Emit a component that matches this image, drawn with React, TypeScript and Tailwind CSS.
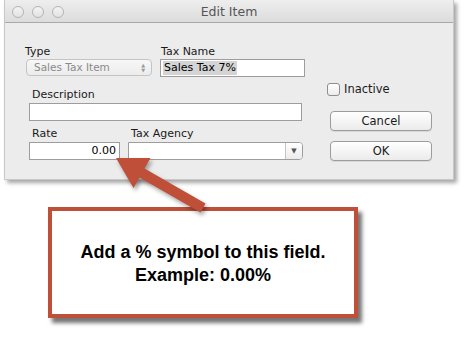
import React from 'react'

const ui = { fontFamily: '"DejaVu Sans", "Liberation Sans", sans-serif' }

function Light() {
  return <div className="w-[12px] h-[12px] rounded-full border border-[#b4b4b4] bg-gradient-to-b from-[#f4f4f4] to-[#e2e2e2]" />
}

function Label({ children, className = '' }: { children: React.ReactNode; className?: string }) {
  return <div className={`text-[11px] leading-[13px] text-[#1a1a1a] ${className}`}>{children}</div>
}

function MacButton({ children }: { children: React.ReactNode }) {
  return (
    <div className="w-[102px] h-[20px] rounded-[4px] border border-[#9c9c9c] bg-gradient-to-b from-white to-[#ebebeb] flex items-center justify-center text-[11.5px] text-[#1a1a1a] shadow-[0_1px_0_rgba(0,0,0,0.08)]">
      {children}
    </div>
  )
}

export default function App() {
  return (
    <div className="relative w-[464px] h-[339px] bg-white overflow-hidden" style={ui}>
      {/* window */}
      <div className="ml-[4px] w-[450px] h-[180px] bg-[#ececec] border-l border-r border-b border-[#c8c8c8] shadow-[3px_3px_4px_rgba(0,0,0,0.35)]">
        <div className="relative h-[23px] border-b border-[#a9a9a9] bg-gradient-to-b from-[#eeeeee] to-[#dcdcdc] flex items-center">
          <div className="flex gap-[8px] pl-[7px] pt-[1px]">
            <Light />
            <Light />
            <Light />
          </div>
          <div className="absolute inset-0 flex items-center justify-center pt-[2px] text-[12.5px] text-[#555555]">Edit Item</div>
        </div>

        <div className="flex">
          {/* left side */}
          <div className="w-[300px]">
            <div className="flex pt-[22px] pl-[20px]">
              <div className="w-[138px]">
                <Label>Type</Label>
                <div className="mt-[1px] ml-[1px] w-[126px] h-[17px] rounded-[4px] border border-[#c4c4c4] bg-gradient-to-b from-[#f7f7f7] to-[#ececec] flex items-center justify-between pl-[7px] pr-[6px]">
                  <span className="text-[10.5px] text-[#8a8a8a]">Sales Tax Item</span>
                  <span className="flex flex-col items-center leading-none text-[#9a9a9a] text-[5px]">
                    <span>▲</span>
                    <span>▼</span>
                  </span>
                </div>
              </div>
              <div>
                <Label className="ml-[1px]">Tax Name</Label>
                <div className="mt-[1px] w-[145px] h-[18px] border border-[#9d9d9d] bg-white flex items-center pl-[2px]">
                  <span className="text-[11px] leading-[14px] text-black bg-[#d4d4d4] px-[1px]">Sales Tax 7%</span>
                </div>
              </div>
            </div>

            <div className="pl-[24px] pt-[11px]">
              <Label className="ml-[3px]">Description</Label>
              <div className="mt-[2px] w-[273px] h-[18px] border border-[#9d9d9d] bg-white" />
            </div>

            <div className="flex pl-[24px] pt-[6px]">
              <div className="w-[99px]">
                <Label className="ml-[3px]">Rate</Label>
                <div className="mt-[2px] w-[91px] h-[18px] border border-[#9d9d9d] bg-white flex items-center justify-end pr-[3px] text-[11px] text-black">
                  0.00
                </div>
              </div>
              <div>
                <Label className="ml-[3px]">Tax Agency</Label>
                <div className="mt-[2px] w-[175px] h-[18px] rounded-r-[4px] border border-[#9d9d9d] bg-white flex justify-end">
                  <div className="w-[17px] border-l border-[#c4c4c4] bg-gradient-to-b from-white to-[#ececec] rounded-r-[3px] flex items-center justify-center text-[7px] text-[#555]">▼</div>
                </div>
              </div>
            </div>
          </div>

          {/* right side */}
          <div className="pl-[22px] pt-[58px]">
            <div className="flex items-center gap-[4px]">
              <div className="w-[13px] h-[13px] rounded-[3px] border border-[#8e8e8e] bg-gradient-to-b from-white to-[#ececec]" />
              <span className="text-[11.5px] text-[#1a1a1a]">Inactive</span>
            </div>
            <div className="ml-[3px] mt-[13px] flex flex-col gap-[10px]">
              <MacButton>Cancel</MacButton>
              <MacButton>OK</MacButton>
            </div>
          </div>
        </div>
      </div>

      {/* callout */}
      <div
        className="ml-[48px] mt-[27px] w-[310px] h-[111px] border-[4px] border-[#bf4f38] bg-white shadow-[4px_5px_4px_rgba(0,0,0,0.55)] flex flex-col items-center justify-center pt-[2px] text-[18px] leading-[23px] font-bold text-black"
        style={{ fontFamily: '"Liberation Sans", Arial, sans-serif' }}
      >
        <div>Add a % symbol to this field.</div>
        <div>Example: 0.00%</div>
      </div>

      {/* arrow */}
      <svg className="absolute left-0 top-0" width="464" height="339" viewBox="0 0 464 339">
        <polygon
          points="116,158 150.5,158 144.5,168.6 205.5,203.6 200.5,212.4 139.5,177.4 133.5,188"
          fill="#bf4f38"
          style={{ filter: 'drop-shadow(2px 3px 2px rgba(0,0,0,0.35))' }}
        />
      </svg>
    </div>
  )
}
